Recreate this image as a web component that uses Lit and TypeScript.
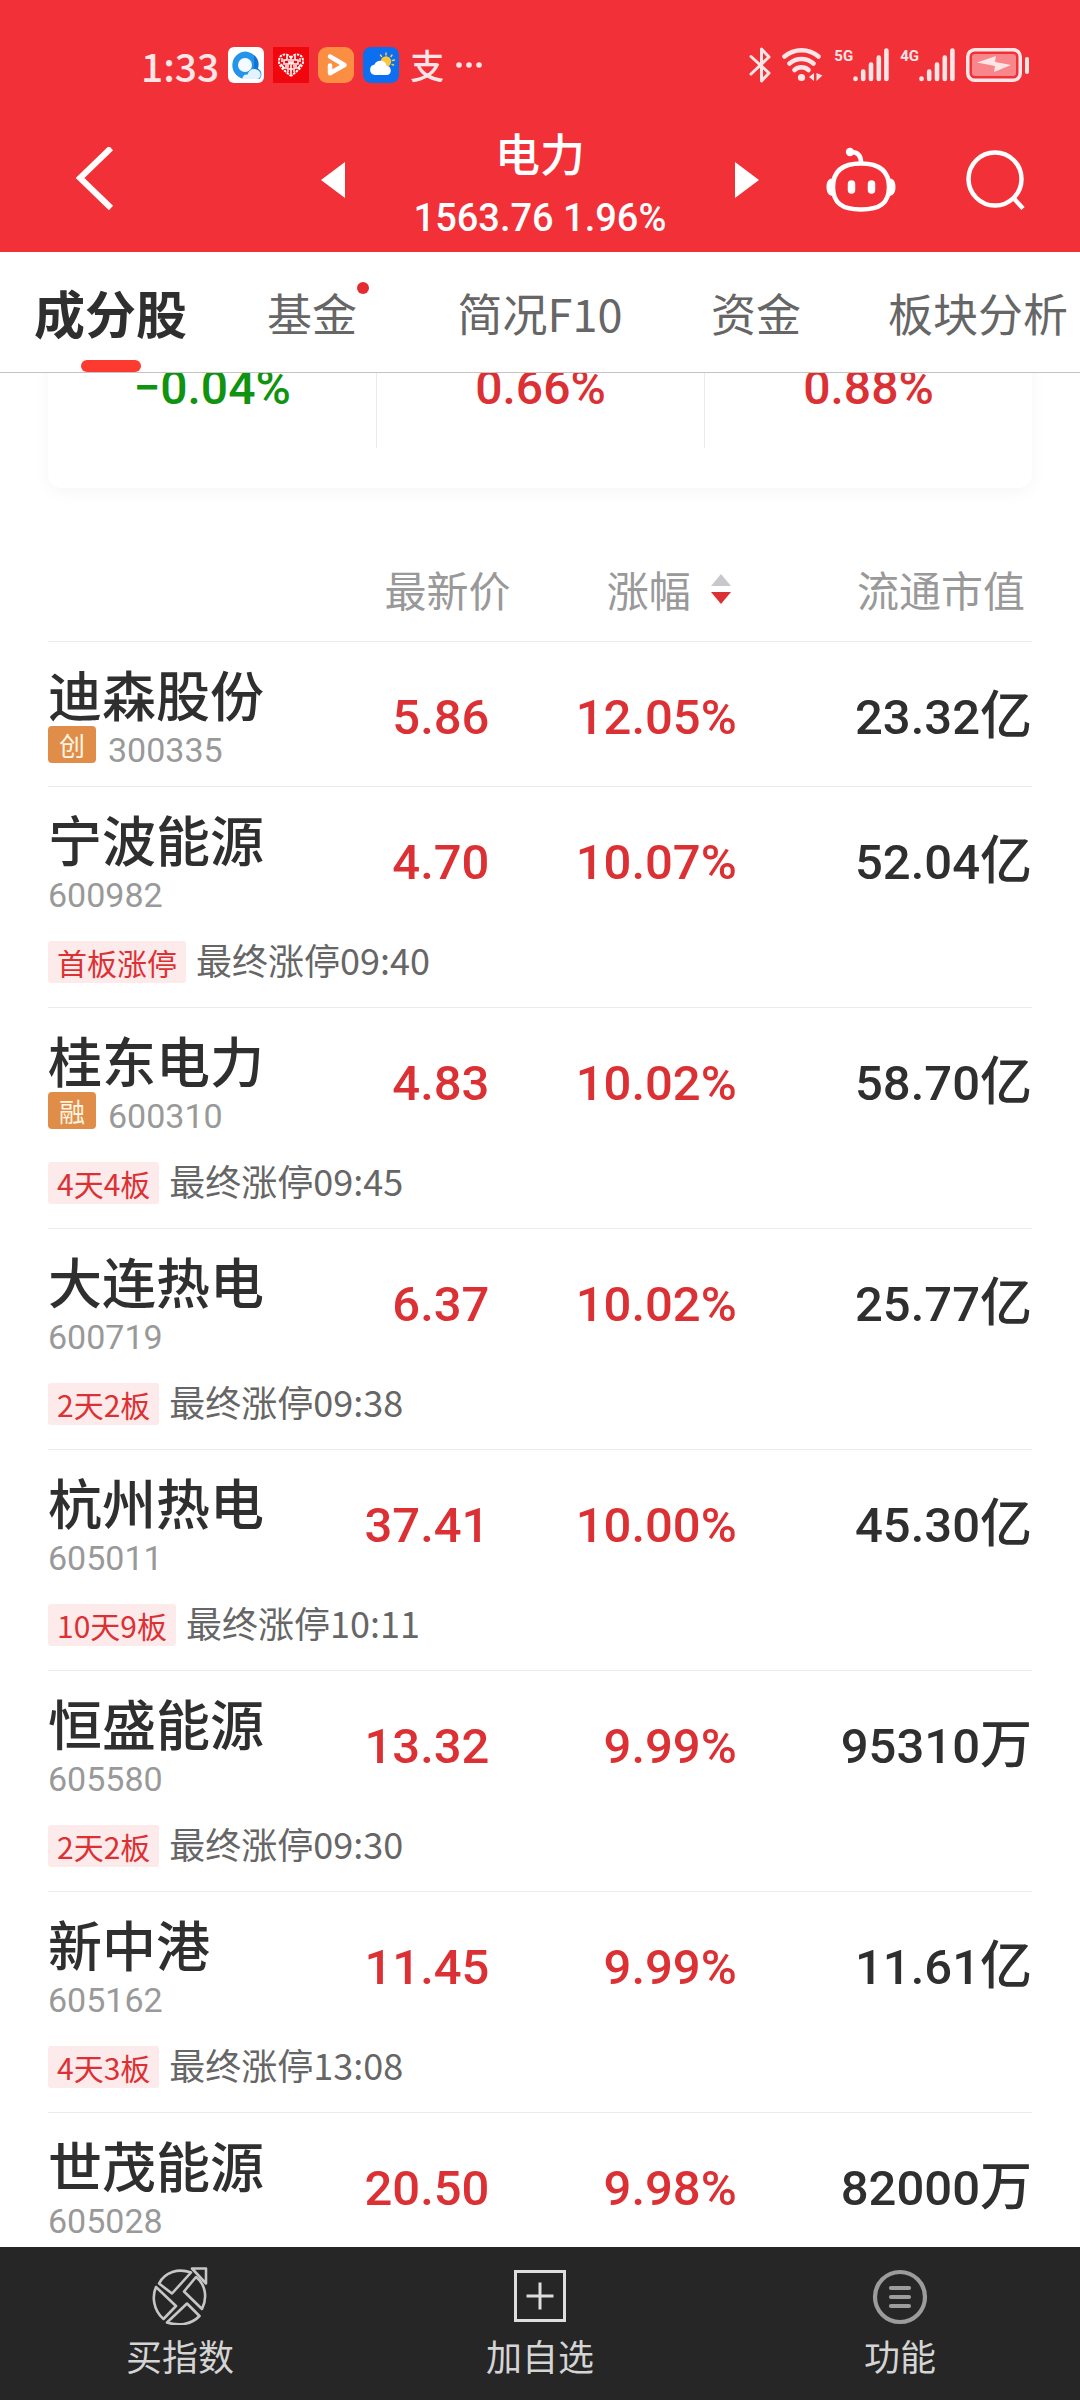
import { LitElement, html, css, svg, nothing } from "lit";
import { customElement, property } from "lit/decorators.js";
import { classMap } from "lit/directives/class-map.js";

interface Stock {
  name: string;
  code: string;
  badge?: string;
  price: string;
  change: string;
  cap: string;
  unit: string;
  tag?: string;
  time?: string;
}

const STOCKS: Stock[] = [
  { name: "迪森股份", code: "300335", badge: "创", price: "5.86", change: "12.05%", cap: "23.32", unit: "亿" },
  { name: "宁波能源", code: "600982", price: "4.70", change: "10.07%", cap: "52.04", unit: "亿", tag: "首板涨停", time: "09:40" },
  { name: "桂东电力", code: "600310", badge: "融", price: "4.83", change: "10.02%", cap: "58.70", unit: "亿", tag: "4天4板", time: "09:45" },
  { name: "大连热电", code: "600719", price: "6.37", change: "10.02%", cap: "25.77", unit: "亿", tag: "2天2板", time: "09:38" },
  { name: "杭州热电", code: "605011", price: "37.41", change: "10.00%", cap: "45.30", unit: "亿", tag: "10天9板", time: "10:11" },
  { name: "恒盛能源", code: "605580", price: "13.32", change: "9.99%", cap: "95310", unit: "万", tag: "2天2板", time: "09:30" },
  { name: "新中港", code: "605162", price: "11.45", change: "9.99%", cap: "11.61", unit: "亿", tag: "4天3板", time: "13:08" },
  { name: "世茂能源", code: "605028", price: "20.50", change: "9.98%", cap: "82000", unit: "万" },
];

const FONT = css`"Noto Sans CJK SC", "Noto Sans", sans-serif`;
const NUM = css`Roboto, "Noto Sans CJK SC", sans-serif`;

@customElement("status-bar")
export class StatusBar extends LitElement {
  static styles = css`
    :host {
      display: flex;
      justify-content: space-between;
      align-items: center;
      box-sizing: border-box;
      height: 108px;
      padding: 22px 50px 0 141px;
      color: #ffe6e6;
      font-family: ${FONT};
    }
    .side {
      display: flex;
      align-items: center;
      gap: 9px;
    }
    .time {
      font-size: 39px;
      line-height: 48px;
      font-weight: 500;
    }
    .pay {
      font-size: 34px;
      line-height: 36px;
      font-weight: 500;
      padding: 0 2px;
    }
    .net {
      display: flex;
      align-items: flex-start;
    }
    .gen {
      font: 700 15px/16px ${NUM};
    }
    .right {
      gap: 11px;
    }
    svg {
      display: block;
    }
  `;

  private signal(label: string) {
    return html`<span class="net">
      <span class="gen">${label}</span>
      <svg width="36" height="34" viewBox="0 0 36 34" stroke="currentColor" stroke-width="4.6" stroke-linecap="round">
        <path d="M2.500 30.500v.5M10.200 23.500V31M18 16.500V31M25.800 9.500V31M33.400 2.500V31" />
      </svg>
    </span>`;
  }

  render() {
    return html`
      <div class="side">
        <span class="time">1:33</span>
        <svg width="36" height="36" viewBox="0 0 36 36">
          <rect width="36" height="36" rx="6" fill="#fff" />
          <path d="M18 4.500a13.700 13.700 0 1 0 0 27.400h13.500a6.500 6.500 0 0 0-1.800-10.500A13.700 13.700 0 0 0 18 4.500z" fill="#2494ea" />
          <path d="M26 22a7 7 0 0 1 6 3.500l-2-3.800c2-7-1-11.500-4-13.500" fill="#1273d6" />
          <circle cx="17" cy="18" r="7" fill="#f4faff" />
          <path d="M14.500 32c-.2-3 2.500-4.800 5-4.300 1.200-4.200 4-6 7.200-5.700 3.600.300 6 3 6 5.800 0 2.600-1.800 4.200-4 4.200z" fill="#e3f2fc" />
        </svg>
        <svg width="36" height="36" viewBox="0 0 36 36" fill="none" stroke="#fff" stroke-width="1.500">
          <rect width="36" height="36" fill="#f0060c" stroke="none" />
          <path d="M18 11c-3-5-11-5-12 2-1 6 6 11 12 16M18 11c3-5 11-5 12 2 1 6-6 11-12 16" stroke-dasharray="2.500 1" stroke-width="2" />
          <path d="M18 9v18M14 9v4h-3v4h5v-5M9 11v4M22 9v4h3v4h-5v-5M27 11v4M8 17l3 4h4v4M28 17l-3 4h-4v4M12 19h4M20 19h4M16 16h4M16 22h4" />
        </svg>
        <svg width="36" height="36" viewBox="0 0 36 36">
          <rect width="36" height="36" rx="9" fill="#fa8e43" />
          <path d="M12 26V18.500M12 9.500 26.500 18 12 26.200" fill="none" stroke="#fff" stroke-width="4.500" stroke-linecap="round" stroke-linejoin="round" />
        </svg>
        <svg width="36" height="36" viewBox="0 0 36 36">
          <rect width="36" height="36" rx="8" fill="#0b6ff0" />
          <g stroke="#ffc94a" stroke-width="1.500" stroke-linecap="round">
            <path d="M23 6v2M29 8l-1 1.500M17.500 8l1 1.500M31.500 13l-2 .500M30.500 18l-1.500-.500" />
          </g>
          <circle cx="23" cy="14.500" r="5.200" fill="#fbc640" />
          <path d="M12 28a5.300 5.300 0 0 1-.5-10.500 6.500 6.500 0 0 1 12.200 1.200A4.800 4.800 0 0 1 24.500 28z" fill="#fff" />
        </svg>
        <span class="pay">支</span>
        <svg width="28" height="8" viewBox="0 0 28 8" fill="currentColor">
          <circle cx="4" cy="4" r="2.800" /><circle cx="14" cy="4" r="2.800" /><circle cx="24" cy="4" r="2.800" />
        </svg>
      </div>
      <div class="side right">
        <svg width="22" height="36" viewBox="0 0 22 36" fill="none" stroke="currentColor" stroke-width="3" stroke-linejoin="round" stroke-linecap="round">
          <path d="M2 9.500 20 26l-7.500 8V2L20 10 2 27" />
        </svg>
        <svg width="41" height="36" viewBox="0 0 41 36" fill="none" stroke="currentColor" stroke-width="4.500" stroke-linecap="round">
          <path d="M2.500 9.500a26 26 0 0 1 34 0M7.500 16.500a18 18 0 0 1 24 0M12.500 23a10.500 10.500 0 0 1 14 0" />
          <circle cx="19.500" cy="30.500" r="3.600" fill="currentColor" stroke="none" />
          <path d="m27 30 5-4v8zM34.500 26l6 2.500-6 5.500z" fill="currentColor" stroke="none" />
        </svg>
        ${this.signal("5G")} ${this.signal("4G")}
        <svg width="64" height="34" viewBox="0 0 64 34">
          <rect x="1.750" y="1.750" width="52.500" height="30.500" rx="7" fill="none" stroke="currentColor" stroke-width="3.500" />
          <rect x="6" y="6" width="44" height="22" rx="3" fill="#f8868b" />
          <rect x="59" y="9" width="4" height="17" rx="2" fill="currentColor" />
          <path d="M11 14.500 29 18l-1 6 17-7-16-3 1-6z" fill="currentColor" />
        </svg>
      </div>
    `;
  }
}

@customElement("stock-table")
export class StockTable extends LitElement {
  @property({ attribute: false }) stocks: Stock[] = [];

  static styles = css`
    :host {
      display: block;
      padding: 0 48px;
    }
    table {
      width: 100%;
      table-layout: fixed;
      border-collapse: separate;
      border-spacing: 0;
      font-family: ${FONT};
    }
    .c-name { width: 27%; }
    .c-price { width: 20%; }
    .c-change { width: 23%; }
    th, td {
      padding: 0;
      text-align: right;
      vertical-align: middle;
      white-space: nowrap;
    }
    .head {
      box-sizing: border-box;
      height: 101px;
      padding-bottom: 4px;
      border-bottom: 1px solid #ebebeb;
      color: #999;
      font-size: 42px;
      line-height: 60px;
      font-weight: 400;
    }
    .head-cap { padding-right: 7px; }
    .sort {
      display: inline-flex;
      align-items: center;
      gap: 20px;
      padding: 0 6px 0 0;
      border: 0;
      background: none;
      color: inherit;
      font: inherit;
    }
    .name-cell {
      height: 144px;
      padding: 20px 0 16px;
      box-sizing: border-box;
      text-align: left;
      font-weight: 400;
    }
    .name {
      color: #2f2f2f;
      font-size: 54px;
      line-height: 64px;
      font-weight: 500;
    }
    .sub {
      display: flex;
      height: 44px;
      gap: 12px;
      align-items: flex-start;
    }
    .badge {
      width: 48px;
      border-radius: 4px;
      background: #e08d4a;
      color: #fff6e2;
      font-size: 26px;
      line-height: 37px;
      text-align: center;
    }
    .code {
      align-self: flex-end;
      color: #999;
      font: 34px/40px ${NUM};
    }
    .num {
      padding-top: 8px;
      color: #dc3134;
      font: 500 49px/64px ${NUM};
    }
    .price { padding-right: 21px; }
    .cap { color: #2f2f2f; }
    .unit {
      font-family: ${FONT};
      font-size: 52px;
      line-height: 0;
    }
    .status-cell {
      box-sizing: border-box;
      height: 77px;
      padding: 10px 0 24px;
    }
    .status {
      display: flex;
      align-items: center;
      gap: 10px;
      height: 42px;
      color: #666;
      font-size: 36px;
      line-height: 42px;
    }
    .when { padding-bottom: 6px; }
    .tag {
      padding: 0 9px;
      border-radius: 3px;
      background: #fdeaea;
      color: #dc3134;
      font-size: 30px;
    }
    .line { border-bottom: 1px solid #ebebeb; }
    .name-cell.line { height: 145px; }
  `;

  render() {
    return html`
      <table>
        <colgroup>
          <col class="c-name" /><col class="c-price" /><col class="c-change" /><col />
        </colgroup>
        <thead>
          <tr>
            <td class="head"></td>
            <th class="head" scope="col">最新价</th>
            <th class="head" scope="col" aria-sort="descending">
              <button class="sort">
                涨幅
                <svg width="20" height="32" viewBox="0 0 20 32" aria-hidden="true">
                  <path d="M10 1 20 13H0z" fill="#c8c8cc" />
                  <path d="M10 31 0 19h20z" fill="#dc3134" />
                </svg>
              </button>
            </th>
            <th class="head head-cap" scope="col">流通市值</th>
          </tr>
        </thead>
        ${this.stocks.map((s) => this.renderStock(s))}
      </table>
    `;
  }

  private renderStock(s: Stock) {
    const line = { line: !s.tag };
    return html`<tbody>
      <tr>
        <th scope="row" class=${classMap({ "name-cell": true, ...line })}>
          <div class="name">${s.name}</div>
          <div class="sub">
            ${s.badge ? html`<span class="badge">${s.badge}</span>` : nothing}
            <span class="code">${s.code}</span>
          </div>
        </th>
        <td class=${classMap({ num: true, price: true, ...line })}>${s.price}</td>
        <td class=${classMap({ num: true, ...line })}>${s.change}</td>
        <td class=${classMap({ num: true, cap: true, ...line })}>${s.cap}<span class="unit">${s.unit}</span></td>
      </tr>
      ${s.tag
        ? html`<tr>
            <td class="status-cell line" colspan="4">
              <div class="status"><span class="tag">${s.tag}</span><span class="when">最终涨停${s.time}</span></div>
            </td>
          </tr>`
        : nothing}
    </tbody>`;
  }
}

@customElement("app-root")
export class AppRoot extends LitElement {
  static styles = css`
    :host {
      display: flex;
      flex-direction: column;
      height: 100vh;
      overflow: hidden;
      background: #fff;
      font-family: ${FONT};
    }
    button {
      display: flex;
      align-items: center;
      justify-content: center;
      margin: 0;
      padding: 0;
      border: 0;
      background: none;
      color: inherit;
      font: inherit;
    }
    svg { display: block; }
    .top {
      flex: none;
      background: #f23038;
      color: #fff;
    }
    .nav {
      display: grid;
      grid-template-columns: 1fr auto 1fr;
      align-items: center;
      height: 144px;
      padding: 0 54px;
    }
    .nav-left {
      display: flex;
      padding-left: 20px;
    }
    .center {
      display: flex;
      align-items: center;
      gap: 64px;
    }
    .heading {
      padding-top: 16px;
      width: 262px;
      height: 128px;
      text-align: center;
    }
    .title {
      margin: 0;
      font-size: 45px;
      line-height: 58px;
      font-weight: 500;
    }
    .index {
      font: 500 38px/72px ${NUM};
      white-space: nowrap;
    }
    .nav-right {
      display: flex;
      justify-content: flex-end;
      gap: 70px;
    }
    .tabs {
      flex: none;
      display: grid;
      grid-template-columns: 221fr 182fr 274fr 158fr 245fr;
      height: 120px;
      border-bottom: 1px solid #c4c4c4;
      background: #fff;
    }
    .tab {
      position: relative;
      color: #666;
      font-size: 45px;
      white-space: nowrap;
    }
    .tab:last-child {
      justify-content: flex-end;
      padding-right: 12px;
    }
    .tab.active {
      color: #2f2f2f;
      font-size: 51px;
      font-weight: 700;
    }
    .tab.active::after {
      content: "";
      position: absolute;
      bottom: 0;
      width: 60px;
      height: 12px;
      border-radius: 6px;
      background: #fc3a30;
    }
    .dot {
      position: absolute;
      left: 100%;
      top: 2px;
      width: 12px;
      height: 12px;
      border-radius: 50%;
      background: #e22c30;
    }
    .label { position: relative; }
    main {
      flex: 1;
      min-height: 0;
      overflow: hidden;
    }
    .card {
      display: grid;
      grid-template-columns: repeat(3, 1fr);
      margin: -40px 48px 0;
      padding: 20px 0 40px;
      border-radius: 14px;
      box-shadow: 0 4px 18px rgba(0, 0, 0, 0.04);
    }
    .stat {
      height: 95px;
      border-left: 1px solid #ebebeb;
      color: #dc3134;
      font: 500 48px/70px ${NUM};
      text-align: center;
    }
    .stat:first-child { border-left: 0; }
    .stat.down { color: #0f9310; }
    .list {
      display: block;
      margin-top: 53px;
    }
    .bottom {
      flex: none;
      display: grid;
      grid-template-columns: repeat(3, 1fr);
      height: 153px;
      background: #262626;
      color: #d4d4d4;
    }
    .action {
      flex-direction: column;
      gap: 4px;
      font-size: 36px;
      line-height: 52px;
    }
  `;

  private stats = ["−0.04%", "0.66%", "0.88%"];
  private tabs = ["成分股", "基金", "简况F10", "资金", "板块分析"];

  private actions = [
    {
      label: "买指数",
      icon: svg`<g fill="none" stroke="#c6c6c6" stroke-width="2.600" stroke-linejoin="round">
        <path d="M8 16.500C14 5 27 1 40 5.500L21 26.500z" />
        <path d="M45 10c9 7 12 20 6 32L33 24.500z" />
        <path d="M5 20 25 39 12.500 52C2 43 1 29 5 20z" />
        <path d="M36 36.500 48.500 49C40 58 27 59 16 55.500z" />
        <path d="M41 1.500h14v15z" />
      </g>`,
    },
    {
      label: "加自选",
      icon: svg`<g fill="none" stroke="#dedede" stroke-width="3">
        <rect x="4.500" y="4.500" width="49" height="49" />
        <path d="M29 15.500v27M15.500 29h27" />
      </g>`,
    },
    {
      label: "功能",
      icon: svg`<g fill="none" stroke="#9c9c9c" stroke-width="4.200" stroke-linecap="round">
        <circle cx="29" cy="30" r="25" />
        <path d="M20 21h18M20 30h18M20 39h18" />
      </g>`,
    },
  ];

  render() {
    return html`
      <header class="top">
        <status-bar></status-bar>
        <div class="nav">
          <div class="nav-left">
            <button aria-label="返回">
              <svg width="40" height="66" viewBox="0 0 40 66"><path d="M37 1 6 31l31 30" fill="none" stroke="#fff" stroke-width="6" /></svg>
            </button>
          </div>
          <div class="center">
            <button aria-label="上一个"><svg width="24" height="36" viewBox="0 0 24 36"><path d="M24 0v36L0 18z" fill="#fff" /></svg></button>
            <div class="heading">
              <h1 class="title">电力</h1>
              <div class="index">1563.76 1.96%</div>
            </div>
            <button aria-label="下一个"><svg width="24" height="36" viewBox="0 0 24 36"><path d="M0 0v36l24-18z" fill="#fff" /></svg></button>
          </div>
          <div class="nav-right">
            <button aria-label="智能助手">
              <svg width="70" height="66" viewBox="0 0 70 66" fill="none" stroke="#fff" stroke-width="4.500" stroke-linecap="round">
                <path d="M35 16.500c20 0 28 9 28 23.500C63 56 54 62.500 35 62.500S7 56 7 40C7 25.500 15 16.500 35 16.500z" />
                <path d="M35 15.500C35 8 31 5 25 5" />
                <circle cx="24" cy="5" r="4.200" fill="#fff" stroke="none" />
                <path d="M25.500 37v6M45.500 37v6" stroke-width="7.500" />
                <path d="M6 31.500C1.500 32 .5 36 .5 40s1 8.500 6.500 9zM64 31.500c4.500.500 5.500 4.500 5.500 8.500s-1 8.500-6.500 9z" fill="#fff" stroke="none" />
              </svg>
            </button>
            <button aria-label="搜索">
              <svg width="60" height="62" viewBox="0 0 60 62" fill="none" stroke="#fff" stroke-width="4.500">
                <circle cx="29" cy="30" r="26.500" />
                <path d="m47.500 49 9.500 10.500" />
              </svg>
            </button>
          </div>
        </div>
      </header>
      <nav class="tabs">
        ${this.tabs.map(
          (t, i) => html`<button class=${classMap({ tab: true, active: i === 0 })}>
            <span class="label">${t}${i === 1 ? html`<i class="dot"></i>` : nothing}</span>
          </button>`,
        )}
      </nav>
      <main>
        <section class="card">
          ${this.stats.map((s) => html`<div class=${classMap({ stat: true, down: s.startsWith("−") })}>${s}</div>`)}
        </section>
        <stock-table class="list" .stocks=${STOCKS}></stock-table>
      </main>
      <footer class="bottom">
        ${this.actions.map(
          (a) => html`<button class="action">
            <svg width="58" height="58" viewBox="0 0 58 58" aria-hidden="true">${a.icon}</svg>
            ${a.label}
          </button>`,
        )}
      </footer>
    `;
  }
}
